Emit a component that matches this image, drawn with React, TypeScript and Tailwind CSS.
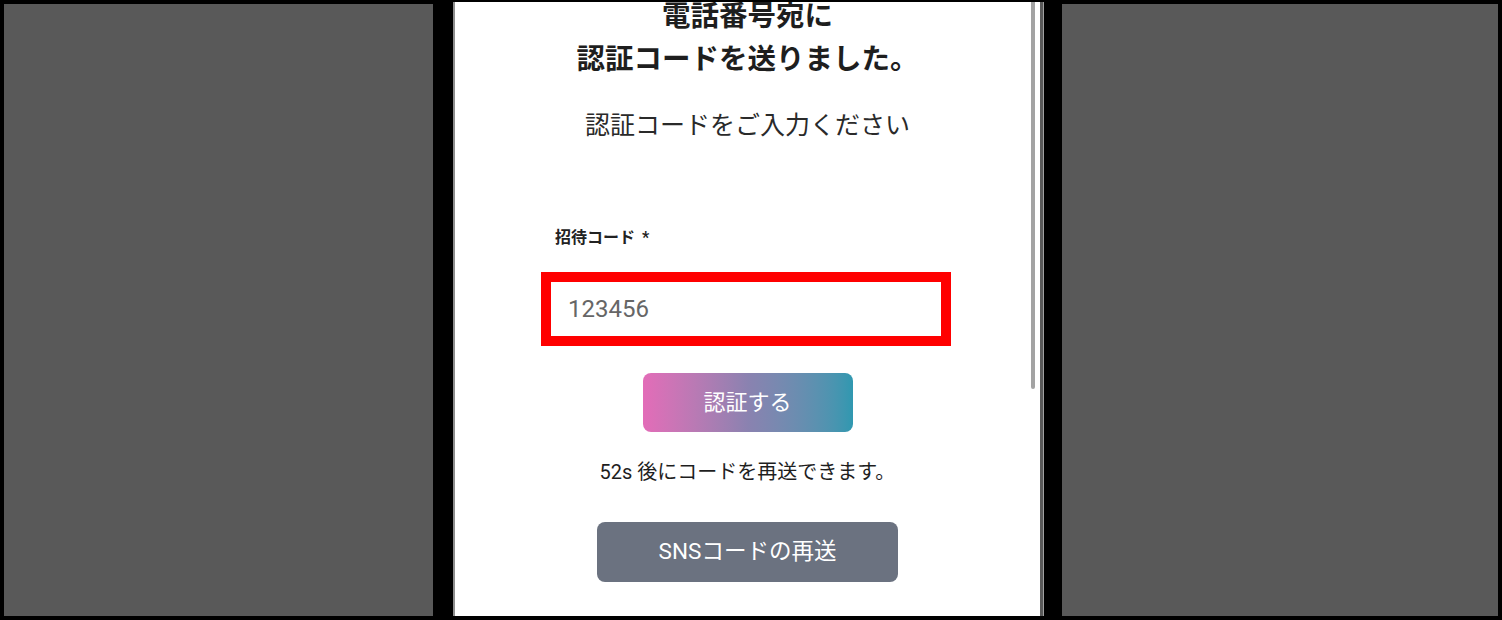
import React from "react";

const font = { fontFamily: '"Roboto", "Noto Sans CJK JP", sans-serif' };

export default function App() {
  return (
    <div className="w-[1502px] h-[620px] bg-black flex overflow-hidden" style={font}>
      <div className="w-[429px] ml-1 my-1 bg-[#595959] shrink-0" />
      <div className="ml-[20px] w-[592px] mt-[2px] mb-1 flex shrink-0">
        <div className="w-[2px] bg-[#8e8e8e]" />
        <div className="relative w-[585px] bg-white overflow-hidden">
          <div className="absolute left-[576px] top-0 w-[4px] h-[387px] rounded-b-full bg-[#a3a3a3]" />
          <div className="flex flex-col items-center">
            <h1 className="mt-[-7px] text-[28.5px] leading-[43px] font-bold text-[#1e1e1e] text-center">
              電話番号宛に
              <br />
              認証コードを送りました。
            </h1>
            <p className="mt-[27px] text-[25px] leading-[36px] text-[#2a2a2a]">認証コードをご入力ください</p>
            <div className="mt-[83px] w-[410px] mr-[3px] flex flex-col">
              <label className="pl-[14px] text-[16px] leading-[22px] font-bold text-[#222]">
                <span>招待コード</span>
                <span className="ml-[7px]">*</span>
              </label>
              <div className="mt-[23px] h-[74px] border-[10px] border-[#ff0000] bg-white flex items-center pl-[17px]">
                <span className="text-[24px] text-[#666] leading-none">123456</span>
              </div>
            </div>
            <button className="mt-[27px] w-[210px] h-[59px] rounded-lg bg-gradient-to-r from-[#e36cb8] via-[#8a82b0] to-[#2f98b0] text-white text-[22px]">
              認証する
            </button>
            <p className="mt-[27px] text-[20px] leading-[26px] text-[#1e1e1e]">52s 後にコードを再送できます。</p>
            <button className="mt-[37px] w-[301px] h-[60px] rounded-lg bg-[#6b7280] text-white text-[22.5px]">
              SNSコードの再送
            </button>
          </div>
        </div>
        <div className="w-[3px] bg-[#5a5a5a]" />
        <div className="w-[1px] bg-[#a0a0a0]" />
        <div className="w-[1px] bg-black" />
      </div>
      <div className="ml-[17px] w-[436px] my-1 bg-[#595959] shrink-0" />
    </div>
  );
}
